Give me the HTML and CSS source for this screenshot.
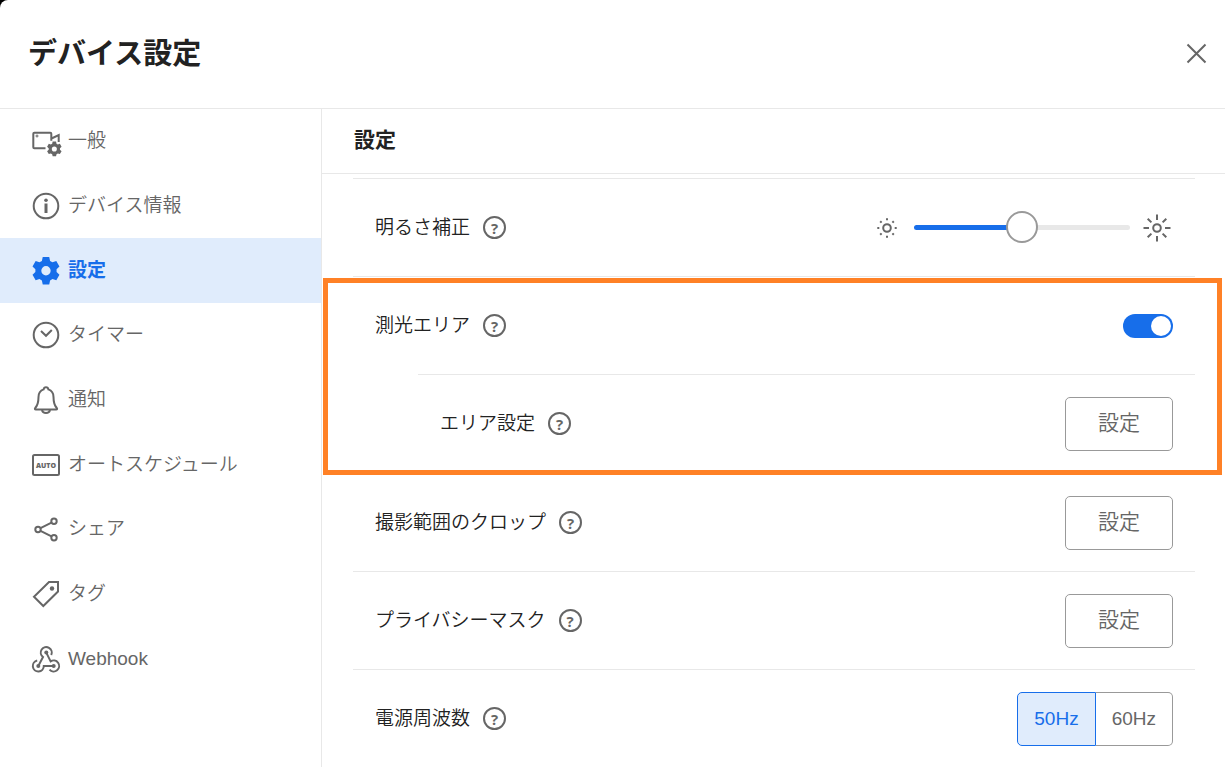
FILE: index.html
```
<!DOCTYPE html>
<html lang="ja">
<head>
    <meta charset="UTF-8">
    <meta name="viewport" content="width=device-width, initial-scale=1.0">
    <title>デバイス設定</title>
    <link rel="stylesheet" href="styles.css">
</head>
<body>
<div class="dialog">
    <header class="dialog-header">
        <h1>デバイス設定</h1>
        <button type="button" class="icon-button close-button" aria-label="閉じる">
            <svg width="32" height="32" viewBox="0 0 32 32"><path d="M7.500 6.500l18 18M25.500 6.500l-18 18"/></svg>
        </button>
    </header>

    <div class="dialog-body">
        <nav class="sidebar">
            <a href="#general" class="nav-item">
                <svg class="nav-icon" viewBox="0 0 32 32">
                    <path d="M15.500 23.300H4.300a1 1 0 0 1-1-1V8.700a1 1 0 0 1 1-1h16a1 1 0 0 1 1 1v7M21.500 13.500l7.200-3.500v7"/>
                    <path d="M5.500 11h3M7 9.500v3" stroke-width="1"/>
                    <path class="solid" fill-rule="evenodd" d="M24.200 15h3.600l.5 2.300 1.400.8 2.200-.7 1.800 3.100-1.700 1.600v1.500l1.700 1.600-1.800 3.100-2.200-.7-1.400.8-.5 2.300h-3.600l-.5-2.300-1.400-.8-2.200.7-1.800-3.100 1.700-1.600v-1.500l-1.700-1.600 1.800-3.100 2.200.7 1.400-.8zM26 20.200a2.700 2.700 0 1 0 0 5.400 2.700 2.700 0 0 0 0-5.400z" transform="translate(-.1 2.500) scale(.94)"/>
                </svg>
                <span>一般</span>
            </a>
            <a href="#info" class="nav-item">
                <svg class="nav-icon" viewBox="0 0 32 32">
                    <circle cx="16" cy="16" r="12.300"/>
                    <path d="M16 13.500v9.500" stroke-width="3"/>
                    <circle class="solid" cx="16" cy="10.200" r="1.800"/>
                </svg>
                <span>デバイス情報</span>
            </a>
            <a href="#settings" class="nav-item active" aria-current="page">
                <svg class="nav-icon" viewBox="0 0 32 32">
                    <path class="solid" fill-rule="evenodd" d="M12.600 2.600h6.800l.9 4.200 2.500 1.400 4-1.300 3.300 5.700-3 2.900v2.900l3 2.900-3.300 5.700-4-1.300-2.500 1.400-.9 4.200h-6.800l-.9-4.200-2.500-1.400-4 1.300-3.300-5.700 3-2.900v-2.900l-3-2.900 3.300-5.700 4 1.300 2.500-1.400zM16 12.100a4.900 4.900 0 1 0 0 9.800 4.900 4.900 0 0 0 0-9.800z" transform="translate(.7 -.5) scale(.955)"/>
                </svg>
                <span>設定</span>
            </a>
            <a href="#timer" class="nav-item">
                <svg class="nav-icon" viewBox="0 0 32 32">
                    <circle cx="16" cy="16" r="12.300"/>
                    <path d="M11 12l5 4.800 5.800-5.800"/>
                </svg>
                <span>タイマー</span>
            </a>
            <a href="#notice" class="nav-item">
                <svg class="nav-icon" viewBox="0 0 32 32">
                    <path d="M16 3.200c-1.400 0-2.200.9-2.400 2.200C10.200 6.600 8.500 9.500 8.500 13c0 6-.6 8.200-3.300 11-.6.800-.3 1.500.6 1.500h20.400c.9 0 1.200-.7.6-1.500-2.700-2.800-3.300-5-3.300-11 0-3.500-1.700-6.400-5.100-7.600-.2-1.300-1-2.200-2.400-2.200z"/>
                    <path d="M12 26c.4 2 2 3 4 3s3.600-1 4-3"/>
                </svg>
                <span>通知</span>
            </a>
            <a href="#auto-schedule" class="nav-item">
                <svg class="nav-icon" viewBox="0 0 32 32">
                    <rect x="3" y="6" width="26" height="20" rx="1.500"/>
                    <text x="16" y="18.600" text-anchor="middle">AUTO</text>
                </svg>
                <span>オートスケジュール</span>
            </a>
            <a href="#share" class="nav-item">
                <svg class="nav-icon" viewBox="0 0 32 32">
                    <circle cx="8" cy="16.500" r="2.700"/>
                    <circle cx="24" cy="8.300" r="2.700"/>
                    <circle cx="24" cy="24.700" r="2.700"/>
                    <path d="M10.500 15.200l11-5.600M10.500 17.800l11 5.600"/>
                </svg>
                <span>シェア</span>
            </a>
            <a href="#tag" class="nav-item">
                <svg class="nav-icon" viewBox="0 0 32 32">
                    <path d="M19 4h9v9.500L13.300 28 4 18.700z"/>
                    <circle class="solid" cx="22" cy="10.500" r="2.200"/>
                </svg>
                <span>タグ</span>
            </a>
            <a href="#webhook" class="nav-item">
                <svg class="nav-icon" viewBox="0 0 32 32">
                    <path d="M21.200 12A5.500 5.500 0 1 0 13 14L8.300 23M16.300 9.600l4.300 8.800a5.500 5.500 0 1 1-1.100 8.200M23.700 23h-9.900a5.500 5.500 0 1 1-6.600-5.400"/>
                    <circle class="solid" cx="16.300" cy="9.600" r="2"/>
                    <circle class="solid" cx="8.300" cy="23" r="2"/>
                    <circle class="solid" cx="23.700" cy="23" r="2"/>
                </svg>
                <span>Webhook</span>
            </a>
        </nav>

        <main class="panel">
            <h2>設定</h2>
            <div class="rows">
                <div class="row">
                    <label for="brightness">明るさ補正</label>
                    <button type="button" class="icon-button help" aria-label="明るさ補正のヘルプ">?</button>
                    <div class="control brightness">
                        <svg class="sun" viewBox="0 0 32 32">
                            <circle cx="16" cy="16" r="3.800"/>
                            <path d="M16 6.300v2M16 23.700v2M6.300 16h2M23.700 16h2M9.200 9.200l1.400 1.400M21.400 21.400l1.400 1.400M9.200 22.800l1.400-1.400M21.400 10.600l1.400-1.400"/>
                        </svg>
                        <input type="range" id="brightness" min="0" max="100" value="50">
                        <svg class="sun" viewBox="0 0 32 32">
                            <circle cx="16" cy="16" r="3.800"/>
                            <path d="M16 2.500v5.500M16 24v5.500M2.500 16H8M24 16h5.500M6.700 6.700l3.700 3.700M21.600 21.600l3.700 3.700M6.700 25.300l3.700-3.700M21.600 10.400l3.700-3.700"/>
                        </svg>
                    </div>
                </div>

                <div class="highlight">
                    <div class="row">
                        <label for="metering">測光エリア</label>
                        <button type="button" class="icon-button help" aria-label="測光エリアのヘルプ">?</button>
                        <input type="checkbox" role="switch" id="metering" class="control toggle" checked>
                    </div>
                    <div class="row sub-row">
                        <span id="areaLabel">エリア設定</span>
                        <button type="button" class="icon-button help" aria-label="エリア設定のヘルプ">?</button>
                        <button type="button" class="control outline-button" aria-describedby="areaLabel">設定</button>
                    </div>
                </div>

                <div class="row">
                    <span id="cropLabel">撮影範囲のクロップ</span>
                    <button type="button" class="icon-button help" aria-label="撮影範囲のクロップのヘルプ">?</button>
                    <button type="button" class="control outline-button" aria-describedby="cropLabel">設定</button>
                </div>
                <div class="row">
                    <span id="maskLabel">プライバシーマスク</span>
                    <button type="button" class="icon-button help" aria-label="プライバシーマスクのヘルプ">?</button>
                    <button type="button" class="control outline-button" aria-describedby="maskLabel">設定</button>
                </div>
                <div class="row">
                    <span id="hzLabel">電源周波数</span>
                    <button type="button" class="icon-button help" aria-label="電源周波数のヘルプ">?</button>
                    <div class="control segments" role="radiogroup" aria-labelledby="hzLabel">
                        <input type="radio" name="hz" id="hz50" checked>
                        <label for="hz50">50Hz</label>
                        <input type="radio" name="hz" id="hz60">
                        <label for="hz60">60Hz</label>
                    </div>
                </div>
            </div>
        </main>
    </div>
</div>

<script>
    const brightness = document.getElementById('brightness');

    // Keep the filled part of the track in step with the thumb
    brightness.addEventListener('input', () => {
        brightness.style.setProperty('--fill', brightness.value + '%');
    });
</script>
</body>
</html>
```
FILE: styles.css
```
:root {
    --primary: #176eea;
    --primary-light: #e0ecfc;
    --text: #222;
    --text-secondary: #666;
    --border: #e8e8e8;
    --control-border: #999;
    --highlight: #ff8126;
}

* {
    margin: 0;
    padding: 0;
    box-sizing: border-box;
}

body {
    font-family: "Liberation Sans", "Noto Sans CJK JP", sans-serif;
    font-size: 19px;
    font-weight: 350;
    line-height: 28px;
    background-color: #000;
    color: var(--text);
}

button,
input {
    font: inherit;
    color: inherit;
}

svg {
    flex: none;
    fill: none;
    stroke: currentColor;
    stroke-width: 2;
}

.dialog {
    display: flex;
    flex-direction: column;
    min-height: 100vh;
    background-color: white;
    border-top-left-radius: 8px;
}

.dialog-header {
    display: flex;
    justify-content: space-between;
    align-items: center;
    padding: 32px 13px 32px 28px;
    border-bottom: 1px solid var(--border);
}

h1 {
    font-size: 29px;
    font-weight: 700;
    line-height: 44px;
}

.icon-button {
    flex: none;
    border: none;
    background: none;
    color: var(--text-secondary);
    cursor: pointer;
}

.close-button {
    display: flex;
}

.dialog-body {
    display: flex;
    flex: 1;
}

/* Sidebar */
.sidebar {
    display: flex;
    flex-direction: column;
    flex: 0 0 322px;
    padding-bottom: 76px;
    border-right: 1px solid var(--border);
}

.nav-item {
    display: flex;
    flex: 1;
    align-items: center;
    gap: 6px;
    min-height: 48px;
    padding-left: 30px;
    color: var(--text-secondary);
    text-decoration: none;
}

.nav-item.active {
    background-color: var(--primary-light);
    color: var(--primary);
    font-weight: 700;
}

.nav-icon {
    width: 32px;
    height: 32px;
}

.nav-icon .solid {
    fill: currentColor;
    stroke: none;
}

.nav-icon text {
    fill: currentColor;
    stroke: none;
    font-family: "Open Sans", sans-serif;
    font-size: 7px;
    font-weight: 800;
}

/* Settings panel */
.panel {
    flex: 1;
    min-width: 0;
}

h2 {
    padding: 15px 32px 17px;
    border-bottom: 1px solid var(--border);
    font-size: 21px;
    font-weight: 700;
    line-height: 32px;
}

.rows {
    padding: 4px 30px 0 31px;
}

.row {
    display: flex;
    align-items: center;
    min-height: 98px;
    padding: 0 22px;
    border-top: 1px solid var(--border);
}

.sub-row {
    margin-left: 65px;
}

.control {
    margin-left: auto;
}

.help {
    width: 23px;
    height: 23px;
    margin-left: 13px;
    border: 2px solid var(--text-secondary);
    border-radius: 50%;
    font-family: "Open Sans", sans-serif;
    font-size: 15px;
    font-weight: 700;
    line-height: 16px;
}

.highlight {
    position: relative;
    padding-bottom: 1px;
}

.highlight::after {
    content: "";
    position: absolute;
    inset: 2px -27px -2px -30px;
    border: 5px solid var(--highlight);
    pointer-events: none;
}

.brightness {
    display: flex;
    align-items: center;
    gap: 11px;
}

.sun {
    width: 32px;
    height: 32px;
    color: var(--text-secondary);
}

input[type="range"] {
    --fill: 50%;
    appearance: none;
    width: 216px;
    height: 32px;
    background: none;
    cursor: pointer;
}

input[type="range"]::-webkit-slider-runnable-track {
    height: 5px;
    border-radius: 3px;
    background: linear-gradient(to right, var(--primary) var(--fill), var(--border) var(--fill));
}

input[type="range"]::-webkit-slider-thumb {
    appearance: none;
    width: 32px;
    height: 32px;
    margin-top: -14px;
    border: 2px solid var(--control-border);
    border-radius: 50%;
    background-color: white;
}

.toggle {
    appearance: none;
    display: flex;
    width: 50px;
    height: 24px;
    padding: 2px;
    border-radius: 12px;
    background-color: var(--control-border);
    cursor: pointer;
}

.toggle::before {
    content: "";
    width: 20px;
    height: 20px;
    border-radius: 50%;
    background-color: white;
}

.toggle:checked {
    justify-content: flex-end;
    background-color: var(--primary);
}

.outline-button {
    padding: 10px 32px 12px;
    border: 1px solid var(--control-border);
    border-radius: 5px;
    background-color: white;
    color: var(--text-secondary);
    font-size: 21px;
    line-height: 30px;
    cursor: pointer;
}

.segments {
    display: flex;
}

.segments input {
    appearance: none;
}

.segments label {
    padding: 12px 16px;
    border: 1px solid var(--control-border);
    border-radius: 0 5px 5px 0;
    color: var(--text-secondary);
    cursor: pointer;
}

.segments label:first-of-type {
    border-radius: 5px 0 0 5px;
}

.segments label:last-of-type {
    border-left: none;
}

.segments input:checked + label {
    border-color: var(--primary);
    background-color: var(--primary-light);
    color: var(--primary);
}
```
